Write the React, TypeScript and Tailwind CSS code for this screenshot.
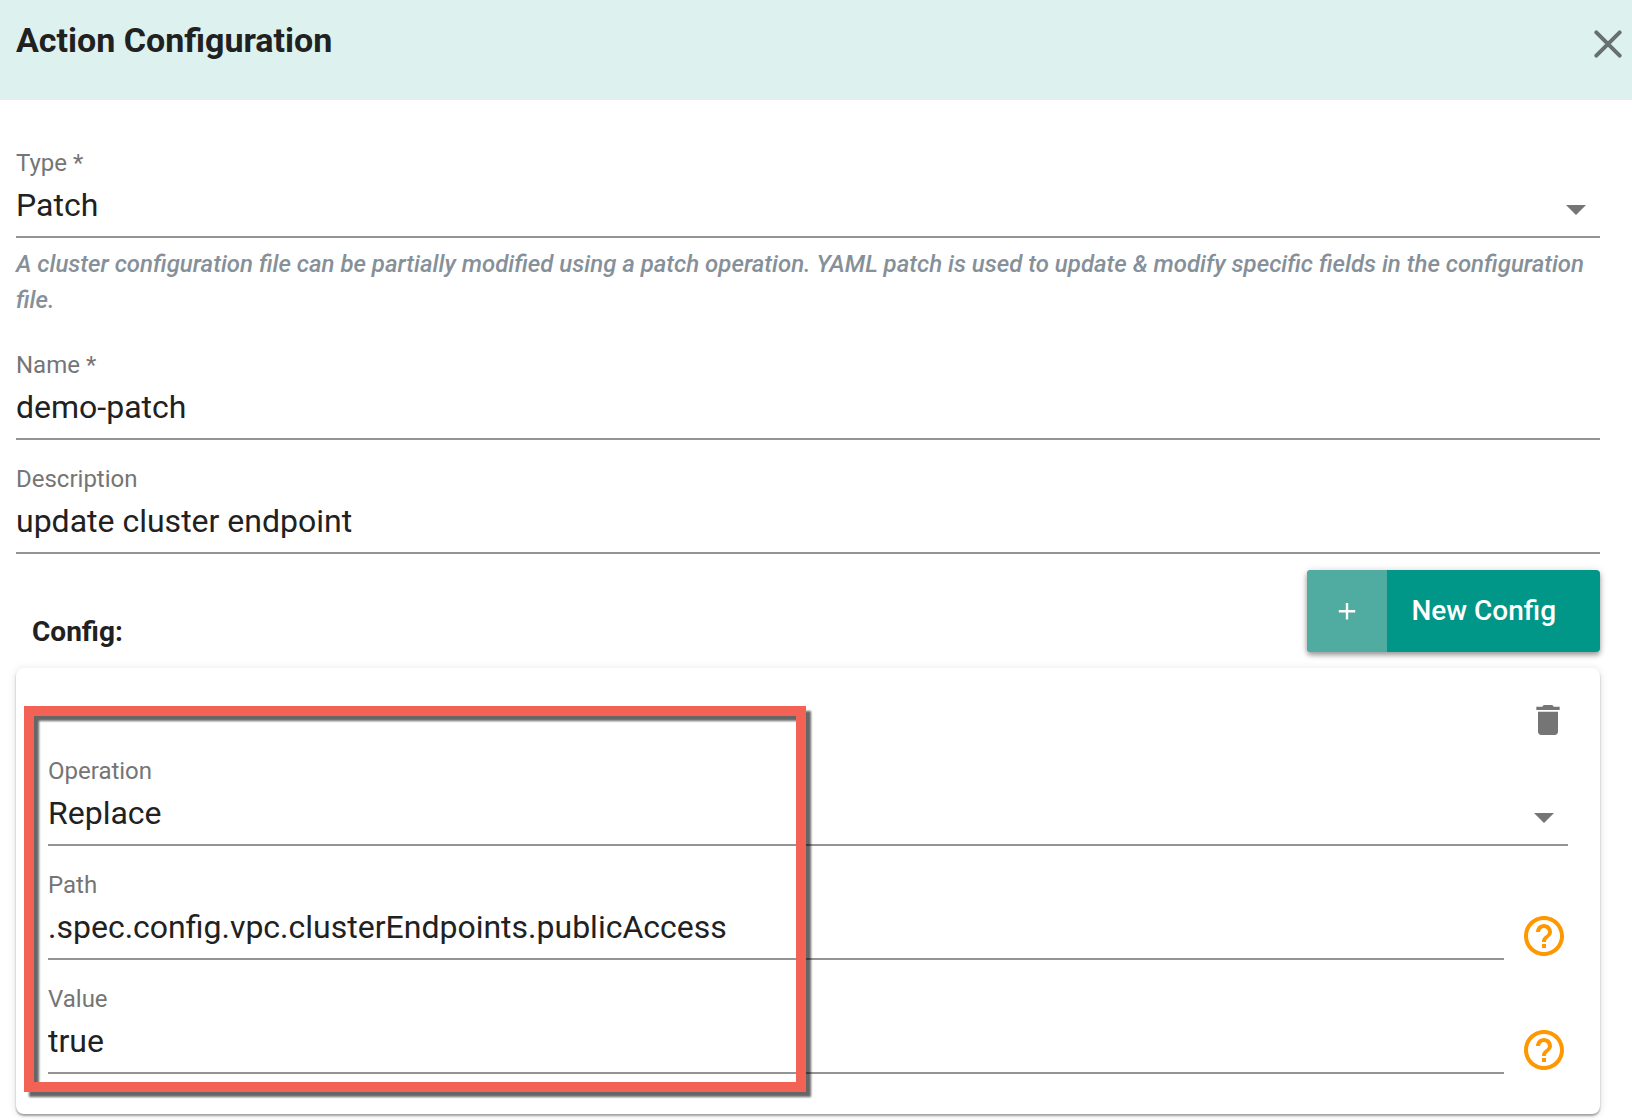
import { useState } from 'react';
import type { ReactNode } from 'react';
import { MdArrowDropDown, MdDelete, MdHelpOutline } from 'react-icons/md';

const controlClass =
  'block w-full h-[60px] pb-1 border-b-2 border-[#949494] bg-transparent text-[32px] text-[#212121] focus:outline-none focus:border-[#009688]';

function Field({ id, label, children }: { id: string; label: string; children: ReactNode }) {
  return (
    <div className="grow min-w-0 pt-6">
      <label htmlFor={id} className="block text-[24px] leading-[30px] text-[#757575]">
        {label}
      </label>
      {children}
    </div>
  );
}

interface TextFieldProps {
  id: string;
  label: string;
  value: string;
  onChange: (value: string) => void;
}

function TextField({ id, label, value, onChange }: TextFieldProps) {
  return (
    <Field id={id} label={label}>
      <input
        id={id}
        type="text"
        value={value}
        onChange={(e) => onChange(e.target.value)}
        className={controlClass}
      />
    </Field>
  );
}

function SelectField({ id, label, value, onChange, options }: TextFieldProps & { options: string[] }) {
  return (
    <Field id={id} label={label}>
      <div className="relative">
        <select
          id={id}
          value={value}
          onChange={(e) => onChange(e.target.value)}
          className={`${controlClass} appearance-none pr-12`}
        >
          {options.map((option) => (
            <option key={option}>{option}</option>
          ))}
        </select>
        <MdArrowDropDown className="absolute right-0 bottom-[5px] size-12 text-[#757575] pointer-events-none" />
      </div>
    </Field>
  );
}

function HelpButton({ label }: { label: string }) {
  return (
    <button type="button" aria-label={label} className="shrink-0 text-[#ff9800]">
      <MdHelpOutline className="size-12" />
    </button>
  );
}

export default function App() {
  const [type, setType] = useState('Patch');
  const [name, setName] = useState('demo-patch');
  const [description, setDescription] = useState('update cluster endpoint');
  const [operation, setOperation] = useState('Replace');
  const [path, setPath] = useState('.spec.config.vpc.clusterEndpoints.publicAccess');
  const [value, setValue] = useState('true');

  return (
    <div className="min-h-screen bg-white font-[Roboto,sans-serif] text-[#212121]">
      <header className="flex items-start justify-between h-[100px] pl-4 pr-2 bg-[#ddf1ef]">
        <h1 className="pt-5 text-[34px] leading-10 font-bold">Action Configuration</h1>
        <button type="button" aria-label="Close" className="mt-7 text-[#667070]">
          <svg viewBox="0 0 32 32" className="size-8" fill="none" stroke="currentColor" strokeWidth="4" strokeLinecap="round">
            <path d="M4.3 4.3l23.4 23.4M27.7 4.3L4.3 27.7" />
          </svg>
        </button>
      </header>

      <form className="pl-4 pr-8 pt-6 pb-1.5" onSubmit={(e) => e.preventDefault()}>
        <SelectField id="type" label="Type *" value={type} onChange={setType} options={['Patch']} />
        <p className="my-2 text-[24px] leading-9 italic font-medium text-[#869099]">
          A cluster configuration file can be partially modified using a patch operation. YAML patch is used to
          update &amp; modify specific fields in the configuration file.
        </p>
        <TextField id="name" label="Name *" value={name} onChange={setName} />
        <TextField id="description" label="Description" value={description} onChange={setDescription} />

        <div className="flex items-end justify-between py-4 pl-4">
          <h2 className="text-[28px] leading-10 font-bold">Config:</h2>
          <button
            type="button"
            className="flex items-stretch h-[82px] overflow-hidden rounded bg-[#009688] text-white text-[28px] font-medium shadow-[0_3px_5px_rgba(0,0,0,0.35),0_1px_10px_rgba(0,0,0,0.12)]"
          >
            <span className="flex items-center justify-center w-20 bg-[#50aba0]">
              <svg viewBox="0 0 18 18" className="size-[18px]" stroke="currentColor" strokeWidth="2.4">
                <path d="M.8 9.3h16.4M9 1.1v16.4" />
              </svg>
            </span>
            <span className="flex items-center pl-6 pr-11">New Config</span>
          </button>
        </div>

        <section className="relative px-8 pt-8 pb-10 rounded-lg shadow-[0_2px_2px_rgba(0,0,0,0.32),0_1px_8px_rgba(0,0,0,0.12)]">
          <div className="flex justify-end -mb-2">
            <button type="button" aria-label="Delete config" className="text-[#757575]">
              <MdDelete className="size-10" />
            </button>
          </div>
          <SelectField
            id="operation"
            label="Operation"
            value={operation}
            onChange={setOperation}
            options={['Replace']}
          />
          <div className="flex items-end gap-4">
            <TextField id="path" label="Path" value={path} onChange={setPath} />
            <HelpButton label="Path help" />
          </div>
          <div className="flex items-end gap-4">
            <TextField id="value" label="Value" value={value} onChange={setValue} />
            <HelpButton label="Value help" />
          </div>

          {/* callout frame over the config fields */}
          <div className="absolute left-2 top-[38px] bottom-[22px] w-[782px] border-10 border-[#f26355] drop-shadow-[5px_5px_1px_rgba(0,0,0,0.6)] pointer-events-none" />
        </section>
      </form>
    </div>
  );
}
